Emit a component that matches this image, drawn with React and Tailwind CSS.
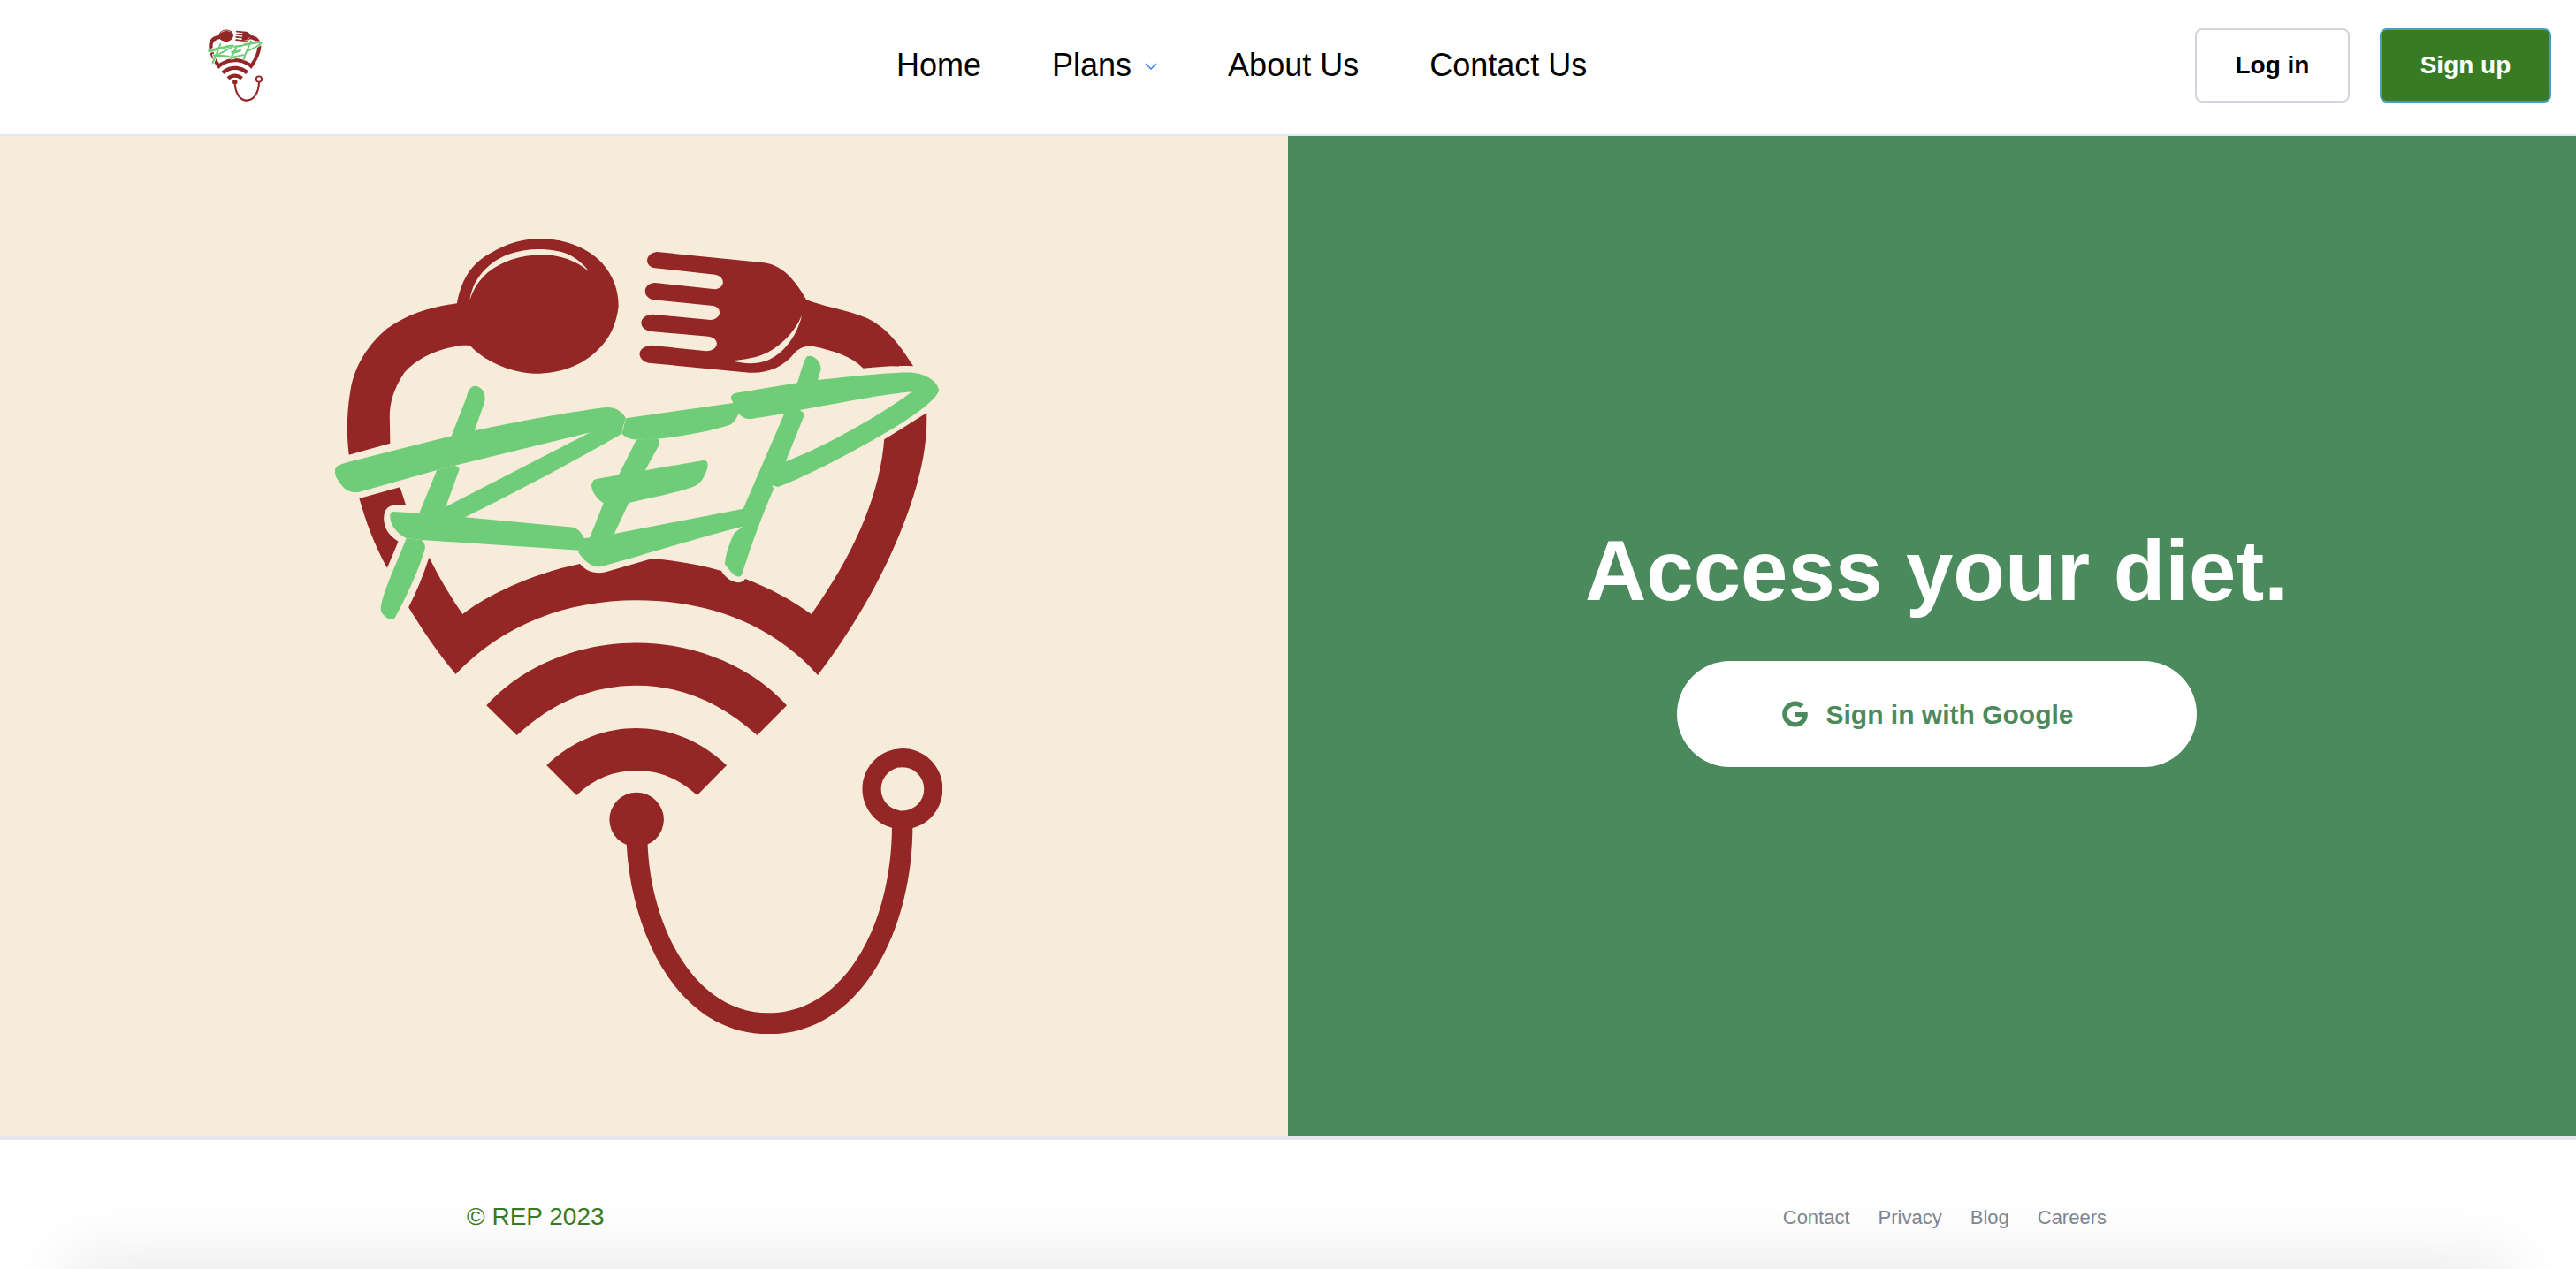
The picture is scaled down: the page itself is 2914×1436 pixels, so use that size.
import { FaGoogle } from 'react-icons/fa'

const RED = '#952626'
const GREEN = '#6fcd7a'

// logo is traced in crop coordinates, the two groups map them back to page pixels
function Logo({ className }) {
  return (
    <svg viewBox="378 270 687 900" className={className}>
      <g transform="translate(340 240) scale(0.4847 0.3333)">
        {/* spoon */}
        <path
          fill={RED}
          fillRule="evenodd"
          d="M363,310 C372,235 395,175 440,140 C480,105 520,90 560,90 C620,92 670,125 700,170 C728,215 740,265 740,320 C735,380 720,430 690,470 C655,520 605,548 545,548 C495,545 435,515 395,455 C388,450 375,452 360,456 C320,465 270,495 240,545 C215,600 205,650 206,700 L207,785 L111,824 C105,760 105,680 115,600 C125,520 155,450 200,395 C250,345 300,322 363,310 Z M393,300 C398,235 430,175 480,145 C530,118 590,122 625,145 C645,160 660,180 670,200 C640,165 605,145 560,145 C510,145 465,170 435,205 C412,235 400,265 393,300 Z"
        />
        {/* fork */}
        <path
          fill={RED}
          fillRule="evenodd"
          d="M830,135 L1080,172 C1120,180 1150,225 1178,297 C1215,320 1270,330 1320,360 C1370,395 1400,460 1428,523 C1390,520 1350,525 1311,530 C1285,490 1240,470 1195,456 C1175,452 1160,462 1150,480 C1125,525 1090,548 1045,545 L810,512 C785,505 778,460 815,452 L945,472 C975,470 978,428 950,422 L815,405 C785,398 785,350 820,347 L955,366 C982,362 982,322 960,318 L822,298 C795,290 795,243 825,240 L965,262 C990,258 990,218 965,212 L825,190 C800,185 800,140 830,135 Z M1168,350 C1150,410 1120,450 1090,475 C1060,497 1035,500 1005,505 C1030,515 1060,518 1085,505 C1120,485 1155,430 1168,350 Z"
        />
        {/* shield and outer wifi arc */}
        <path
          fill={RED}
          d="M1459,682 C1462,800 1440,930 1405,1060 C1360,1230 1290,1410 1205,1572 C1100,1400 950,1318 782,1318 C620,1318 470,1400 360,1569 C320,1500 285,1425 250,1342 C270,1285 285,1230 298,1172 C320,1235 345,1300 376,1365 C430,1305 530,1230 650,1194 C665,1220 685,1230 710,1222 L817,1177 C875,1182 930,1198 980,1218 C990,1245 1020,1275 1036,1245 C1095,1278 1145,1318 1190,1365 C1290,1160 1350,960 1360,772 Z"
        />
        <path
          fill={RED}
          d="M135,972 L230,934 L244,996 L212,996 C195,1000 188,1030 195,1065 C200,1090 212,1105 226,1118 L200,1208 C170,1130 150,1050 135,972 Z"
        />
        {/* REP lettering */}
        <g fill={GREEN}>
          <path d="M78,880 C78,865 85,858 110,848 L350,760 L385,630 C390,590 405,580 420,600 C430,615 430,635 425,655 L404,742 C500,712 620,680 710,663 C735,660 750,680 757,700 L750,730 L675,748 L358,860 L316,876 L135,950 C115,955 100,945 88,915 C80,900 78,890 78,880 Z" />
          <path d="M675,747 L752,700 L748,752 C620,860 500,950 382,1036 L300,1030 L337,1000 Z" />
          <path d="M316,876 L358,860 C368,865 370,870 367,880 L337,1000 L300,1040 L274,1025 Z" />
          <path d="M215,1017 L275,1022 L300,1020 L382,1036 L635,1070 C650,1078 655,1095 660,1107 L680,1105 L680,1150 L650,1148 L280,1113 L245,1107 C225,1095 205,1060 207,1030 C207,1022 210,1017 215,1017 Z" />
          <path d="M245,1107 L280,1113 C290,1130 290,1135 287,1150 C270,1230 240,1320 218,1378 C212,1388 200,1382 190,1365 C182,1350 185,1340 190,1310 C200,1260 225,1180 245,1107 Z" />
          <path d="M757,700 L1012,647 L1022,680 C1015,700 1010,715 1000,722 C950,745 890,760 832,770 L782,772 C760,772 750,755 748,752 Z" />
          <path d="M782,772 L832,770 C837,780 836,785 833,795 L803,875 L763,990 L730,1092 L672,1108 L705,988 L740,893 Z" />
          <path d="M680,915 C680,908 690,905 700,903 L940,842 C950,845 950,860 945,880 C938,905 930,925 915,932 C870,955 810,972 762,988 L705,988 C690,975 675,945 677,925 Z" />
          <path d="M672,1105 L730,1092 L1031,1007 L1030,1067 C900,1115 800,1165 700,1203 C680,1210 660,1185 646,1155 L650,1145 Z" />
          <path
            fillRule="evenodd"
            d="M1157,580 C1165,550 1172,500 1180,490 C1195,480 1215,510 1212,535 L1205,570 C1300,555 1400,540 1430,546 C1465,552 1485,580 1488,605 C1480,640 1430,690 1380,735 C1280,820 1190,890 1112,933 L1098,928 L1102,940 C1075,1030 1050,1130 1028,1230 C1020,1250 1005,1230 988,1195 C990,1160 1000,1120 1010,1090 L1030,1067 L1031,1007 L1127,684 L1050,702 C1035,705 1022,690 1020,680 L1003,635 C1000,620 1010,615 1020,613 Z M1163,672 C1250,650 1350,620 1425,610 C1350,690 1230,790 1130,847 L1172,695 C1175,685 1170,678 1163,672 Z"
          />
        </g>
      </g>
      <g transform="translate(400 640) scale(0.4592 0.3571)" fill={RED}>
        {/* wifi arcs */}
        <path d="M325,443 C420,310 560,245 695,245 C830,245 970,310 1065,443 L992,538 C900,430 800,380 695,380 C590,380 490,430 400,538 Z" />
        <path d="M473,633 C540,550 620,515 695,515 C770,515 850,550 917,633 L844,728 C800,675 750,650 695,650 C640,650 590,675 547,728 Z" />
        {/* stethoscope */}
        <ellipse cx="695" cy="805" rx="67" ry="86" />
        <path d="M670,880 C680,1150 790,1485 1020,1485 C1250,1485 1375,1150 1375,825 L1324,825 C1324,1130 1210,1418 1020,1418 C840,1418 730,1150 722,880 Z" />
        <path
          fillRule="evenodd"
          d="M1251,708 A99,128 0 1 1 1449,708 A99,128 0 1 1 1251,708 Z M1297,708 A53,69 0 1 0 1403,708 A53,69 0 1 0 1297,708 Z"
        />
      </g>
    </svg>
  )
}

function Header() {
  return (
    <header className="flex h-[154px] shrink-0 items-center border-b-2 border-[#e2e6ee] bg-white pb-1 pl-[235px] pr-[28px] font-['Liberation_Sans',Arial,sans-serif]">
      <Logo className="h-[82px] w-[62px] shrink-0" />
      <nav className="ml-[717px] flex items-center gap-20 text-[36px] text-black">
        <a>Home</a>
        <a className="flex items-center gap-[15px]">
          Plans
          <svg viewBox="0 0 14 8" className="mt-[2px] h-2 w-[14px]" fill="none" stroke="#3b82f6" strokeWidth="1.5">
            <path d="M1 1l6 6 6-6" />
          </svg>
        </a>
        <a>About Us</a>
        <a>Contact Us</a>
      </nav>
      <div className="ml-auto flex gap-[34px] text-[28px] font-bold">
        <button className="h-[84px] w-[175px] rounded-lg border-2 border-[#d1d5db] bg-white text-black">Log in</button>
        <button className="h-[84px] w-[194px] rounded-lg border-2 border-[#4b9cb8] bg-[#387b23] text-white">Sign up</button>
      </div>
    </header>
  )
}

function Hero() {
  return (
    <main className="grid h-[1132px] shrink-0 grid-cols-2 font-['Liberation_Sans',Arial,sans-serif]">
      <div className="flex items-center justify-center bg-[#f7ecda] pr-[13px]">
        <Logo className="h-[900px] w-[687px]" />
      </div>
      <div className="flex flex-col items-center justify-center bg-[#4b8a5c] pl-[10px]">
        <h1 className="mb-7 text-[96px] leading-[148px] font-bold text-white">Access your diet.</h1>
        <button className="flex h-[120px] w-[588px] items-center gap-[21px] rounded-full bg-white pl-[119px] text-[30px] font-bold text-[#4b8a5c]">
          <FaGoogle className="h-[30px] w-[29px]" />
          Sign in with Google
        </button>
      </div>
    </main>
  )
}

function Footer() {
  return (
    <footer className="relative flex flex-1 items-center justify-between overflow-hidden border-t-4 border-[#e5e7eb] bg-white pl-[528px] pr-[531px] pt-7 font-['Liberation_Sans',Arial,sans-serif]">
      <span className="text-[28px] text-[#387b23]">© REP 2023</span>
      <div className="flex gap-8 text-[22px] text-[#7f8792]">
        <a>Contact</a>
        <a>Privacy</a>
        <a>Blog</a>
        <a>Careers</a>
      </div>
      {/* shadow coming up from whatever sits below the fold */}
      <div className="absolute left-[75px] right-[75px] top-full h-10 shadow-[0_0_80px_0_rgba(0,0,0,0.15)]" />
    </footer>
  )
}

export default function App() {
  return (
    <div className="flex h-screen flex-col overflow-hidden bg-white">
      <Header />
      <Hero />
      <Footer />
    </div>
  )
}
